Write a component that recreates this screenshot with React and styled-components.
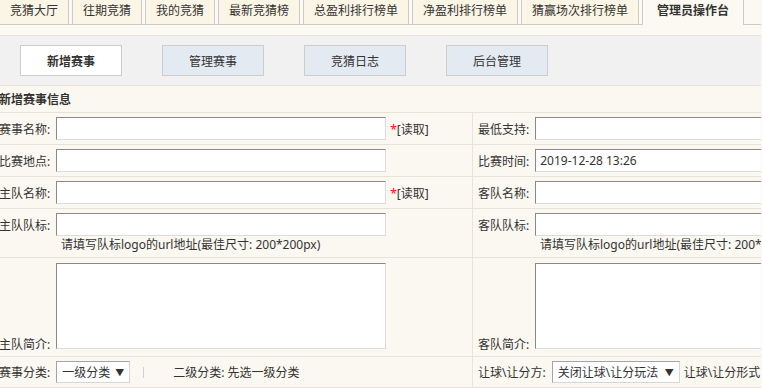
import React from 'react'
import styled, { createGlobalStyle } from 'styled-components'

const Global = createGlobalStyle`
  html, body {
    margin: 0;
    padding: 0;
    overflow: hidden;
    background: #faf8f0;
  }
  body {
    font-family: "Noto Sans", "Noto Sans CJK SC", sans-serif;
    font-size: 12px;
    color: #333;
  }
`

const Page = styled.div`
  width: 762px;
  height: 388px;
  overflow: hidden;
  margin-left: -1px;
`

const TabBar = styled.div`
  display: flex;
  align-items: flex-end;
  height: 24px;
  border-bottom: 1px solid #cacaca;
  background: #fbf9f1;
`

const Tab = styled.div`
  height: ${p => (p.active ? '25px' : '24px')};
  margin-bottom: ${p => (p.active ? '-1px' : '0')};
  padding: 0 ${p => (p.active ? '14px' : '10px')};
  line-height: 21px;
  box-sizing: border-box;
  border-left: 1px solid #cacaca;
  border-right: 1px solid #cacaca;
  margin-right: 3px;
  background: ${p => (p.active ? '#fbf9f1' : '#fbf5e6')};
  font-weight: ${p => (p.active ? 'bold' : 'normal')};
  white-space: nowrap;
  flex-shrink: 0;
`

const Stripe = styled.div`
  height: 10px;
  background: #fbf9f1;
`

const ButtonBand = styled.div`
  display: flex;
  gap: 40px;
  padding: 9px 0 9px 21px;
  background: #f1f1f1;
  border-top: 1px solid #e6e4dc;
  border-bottom: 1px solid #e6e3da;
`

const NavButton = styled.div`
  width: 102px;
  height: 31px;
  box-sizing: border-box;
  border: 1px solid #cdcdcd;
  background: ${p => (p.active ? '#fff' : '#e4eaf2')};
  font-weight: ${p => (p.active ? 'bold' : 'normal')};
  display: flex;
  align-items: center;
  justify-content: center;
`

const HeaderRow = styled.div`
  height: 26px;
  line-height: 28px;
  font-weight: bold;
  border-bottom: 1px solid #e8e4da;
`

const Row = styled.div`
  display: grid;
  grid-template-columns: 473px 1fr;
  border-bottom: 1px solid #e8e4da;
`

const Cell = styled.div`
  display: flex;
  flex-direction: column;
  padding: ${p => p.pad || '4px 0 4px 0'};
  padding-left: ${p => (p.right ? '5px' : '0')};
  border-left: ${p => (p.right ? '1px solid #e8e4da' : 'none')};
  overflow: hidden;
  white-space: nowrap;
`

const Line = styled.div`
  display: flex;
  align-items: ${p => (p.bottom ? 'flex-end' : 'center')};
`

const Label = styled.span`
  margin-right: 6px;
  line-height: ${p => (p.bottom ? '12px' : 'normal')};
  margin-bottom: ${p => (p.bottom ? '-2px' : '0')};
  flex-shrink: 0;
`

const TextInput = styled.div`
  width: 330px;
  height: ${p => p.h || 23}px;
  box-sizing: border-box;
  border: 1px solid;
  border-color: #888 #dcdcdc #dcdcdc #888;
  background: #fff;
  padding-left: 4px;
  line-height: 21px;
  flex-shrink: 0;
`

const Read = styled.span`
  margin-left: 4px;
  & b {
    color: #f00;
    font-weight: normal;
  }
`

const Hint = styled.div`
  padding-left: 62px;
  line-height: 18px;
`

const FakeSelect = styled.div`
  width: ${p => p.w}px;
  height: 22px;
  box-sizing: border-box;
  border: 1px solid;
  border-color: #a4a4a4 #d6d6d6 #d6d6d6 #a4a4a4;
  background: #fff;
  display: flex;
  align-items: center;
  justify-content: space-between;
  padding: 0 5px 0 5px;
  flex-shrink: 0;
  & i {
    font-style: normal;
    font-size: 9px;
    color: #333;
  }
`

const Divider = styled.span`
  width: 1px;
  height: 11px;
  background: #c9d3dc;
  margin: 0 29px 0 13px;
`

const Trail = styled.span`
  margin-left: 4px;
`

const tabs = ['竞猜大厅', '往期竞猜', '我的竞猜', '最新竞猜榜', '总盈利排行榜单', '净盈利排行榜单', '猜赢场次排行榜单']
const buttons = ['新增赛事', '管理赛事', '竞猜日志', '后台管理']

const App = () => {
  return (
    <Page>
      <Global />
      <TabBar>
        {tabs.map(t => (
          <Tab key={t}>{t}</Tab>
        ))}
        <Tab active>管理员操作台</Tab>
      </TabBar>
      <Stripe />
      <ButtonBand>
        {buttons.map((b, i) => (
          <NavButton key={b} active={i === 0}>{b}</NavButton>
        ))}
      </ButtonBand>
      <HeaderRow>新增赛事信息</HeaderRow>

      <Row>
        <Cell>
          <Line>
            <Label>赛事名称:</Label>
            <TextInput />
            <Read><b>*</b>[读取]</Read>
          </Line>
        </Cell>
        <Cell right>
          <Line>
            <Label>最低支持:</Label>
            <TextInput />
          </Line>
        </Cell>
      </Row>

      <Row>
        <Cell>
          <Line>
            <Label>比赛地点:</Label>
            <TextInput />
          </Line>
        </Cell>
        <Cell right>
          <Line>
            <Label>比赛时间:</Label>
            <TextInput>2019-12-28 13:26</TextInput>
          </Line>
        </Cell>
      </Row>

      <Row>
        <Cell>
          <Line>
            <Label>主队名称:</Label>
            <TextInput />
            <Read><b>*</b>[读取]</Read>
          </Line>
        </Cell>
        <Cell right>
          <Line>
            <Label>客队名称:</Label>
            <TextInput />
          </Line>
        </Cell>
      </Row>

      <Row>
        <Cell pad="4px 0 3px 0">
          <Line>
            <Label>主队队标:</Label>
            <TextInput />
          </Line>
          <Hint>请填写队标logo的url地址(最佳尺寸: 200*200px)</Hint>
        </Cell>
        <Cell right pad="4px 0 3px 0">
          <Line>
            <Label>客队队标:</Label>
            <TextInput />
          </Line>
          <Hint>请填写队标logo的url地址(最佳尺寸: 200*200px)</Hint>
        </Cell>
      </Row>

      <Row>
        <Cell pad="5px 0 7px 0">
          <Line bottom>
            <Label bottom>主队简介:</Label>
            <TextInput h={86} />
          </Line>
        </Cell>
        <Cell right pad="5px 0 7px 0">
          <Line bottom>
            <Label bottom>客队简介:</Label>
            <TextInput h={86} />
          </Line>
        </Cell>
      </Row>

      <Row>
        <Cell>
          <Line>
            <Label>赛事分类:</Label>
            <FakeSelect w={74}>一级分类<i>▼</i></FakeSelect>
            <Divider />
            <span>二级分类: 先选一级分类</span>
          </Line>
        </Cell>
        <Cell right>
          <Line>
            <Label>让球\让分方:</Label>
            <FakeSelect w={128}>关闭让球\让分玩法<i>▼</i></FakeSelect>
            <Trail>让球\让分形式</Trail>
          </Line>
        </Cell>
      </Row>
    </Page>
  )
}

export default App
